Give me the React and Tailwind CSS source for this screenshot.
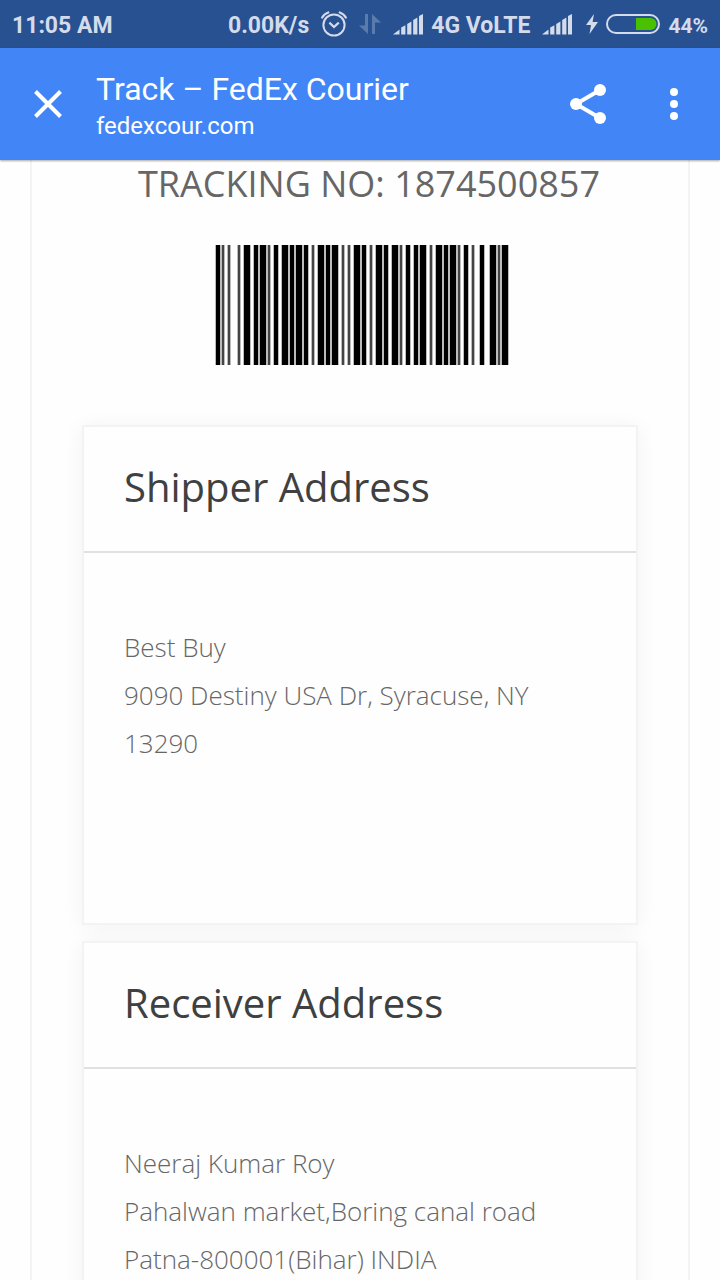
const ADDRESSES = [
  {
    title: "Shipper Address",
    lines: ["Best Buy", "9090 Destiny USA Dr, Syracuse, NY 13290"],
  },
  {
    title: "Receiver Address",
    lines: ["Neeraj Kumar Roy", "Pahalwan market,Boring canal road", "Patna-800001(Bihar) INDIA"],
  },
];

// Code 128 (set B) bar/space widths, digits 0-9
const CODE128_DIGITS = [
  "123122", "123221", "223211", "221132", "221231",
  "213212", "223112", "312131", "311222", "321122",
];
const CODE128_START = "211214";
const CODE128_STOP = "2331113";

function Barcode({ value, check }) {
  const widths = [
    CODE128_START,
    ...value.split("").map((d) => CODE128_DIGITS[Number(d)]),
    check,
    CODE128_STOP,
  ].join("").split("").map(Number);

  const bars = [];
  let x = 0;
  widths.forEach((w, i) => {
    if (i % 2 === 0) bars.push({ x, w });
    x += w;
  });

  return (
    <svg
      viewBox={`-0.5 0 ${x + 1} 60`}
      preserveAspectRatio="none"
      className="h-[120px] w-[294px]"
      role="img"
      aria-label={`Barcode ${value}`}
    >
      {/* soft edges, then the solid bars */}
      {bars.map((b) => (
        <rect key={b.x} x={b.x - 0.5} y="0" width={b.w + 1} height="60" fill="#bbb" />
      ))}
      {bars.map((b) => (
        <rect key={b.x} x={b.x} y="0" width={b.w} height="60" fill={b.w === 1 ? "#444" : "#000"} />
      ))}
    </svg>
  );
}

function SignalIcon() {
  return (
    <svg viewBox="0 0 30 21" className="h-[21px] w-[30px]" fill="currentColor" aria-hidden="true">
      <path d="M0 20.5 6.5 15.5V20.5Z" />
      <path d="M8.2 13.5 12.4 11.2V20.5H8.2Z" />
      <path d="M14.2 10 18.4 7.6V20.5H14.2Z" />
      <path d="M20.2 6 24.4 3.6V20.5H20.2Z" />
      <path d="M26 2 30 0V20.5H26Z" />
    </svg>
  );
}

function AlarmIcon() {
  return (
    <svg viewBox="0 0 26 26" className="h-[26px] w-[26px]" fill="none" stroke="currentColor" strokeLinecap="round" aria-hidden="true">
      <circle cx="13" cy="14" r="10.6" strokeWidth="2" />
      <path d="M8.4 11.6 13 16 17.8 11.6" strokeWidth="2.2" strokeLinecap="butt" />
      <path d="M1.2 6.6C2.4 4.2 4.6 2.4 7.3 1.5M24.8 6.6C23.6 4.2 21.4 2.4 18.7 1.5" strokeWidth="2.2" />
    </svg>
  );
}

function DataIcon() {
  return (
    <svg viewBox="0 0 22 20" className="h-5 w-[22px] opacity-30" fill="currentColor" aria-hidden="true">
      <path d="M6 0H9V20L0 11.5H6Z" />
      <path d="M13 20H16V8.5H22L13 0Z" />
    </svg>
  );
}

function BatteryIcon() {
  return (
    <svg viewBox="0 0 54 20" className="h-5 w-[54px]" aria-hidden="true">
      <rect x="1" y="1" width="52" height="18" rx="9" fill="none" stroke="currentColor" strokeWidth="2" />
      <path d="M30 4H44.5A6 6 0 0 1 44.5 16H30Z" fill="#49c100" />
    </svg>
  );
}

function StatusBar() {
  return (
    <div className="flex h-12 shrink-0 items-center justify-between bg-[#285192] px-3 text-[23px] font-bold leading-6 text-[#d4dceb]">
      <span className="pt-1">11:05 AM</span>
      <div className="flex items-center">
        <span className="pt-1">0.00K/s</span>
        <span className="ml-3"><AlarmIcon /></span>
        <span className="ml-3"><DataIcon /></span>
        <span className="ml-3"><SignalIcon /></span>
        <span className="ml-2 pt-1">4G VoLTE</span>
        <span className="ml-3"><SignalIcon /></span>
        <svg viewBox="0 0 12 20" className="ml-3.5 h-5 w-3" fill="currentColor" aria-hidden="true">
          <path d="M8 0 0 11H5L3.5 20 12 8H6.6Z" />
        </svg>
        <span className="ml-2"><BatteryIcon /></span>
        <span className="ml-2 pt-1 text-[21px]">44%</span>
      </div>
    </div>
  );
}

function AppBar() {
  return (
    <header className="relative z-10 flex h-28 shrink-0 items-center bg-[#4285f6] text-white shadow-[0_1px_2px_rgba(0,0,0,0.35)]">
      <button type="button" aria-label="Close" className="flex h-24 w-24 items-center justify-center">
        <svg viewBox="0 0 28 28" className="h-7 w-7" stroke="currentColor" strokeWidth="4" aria-hidden="true">
          <path d="M1.5 1.5 26.5 26.5M26.5 1.5 1.5 26.5" />
        </svg>
      </button>
      <div className="min-w-0 flex-1 pt-0.5">
        <h1 className="truncate text-[32px] leading-[42px]">Track – FedEx Courier</h1>
        <p className="truncate text-[24px] leading-8">fedexcour.com</p>
      </div>
      <button type="button" aria-label="Share" className="flex h-24 w-20 items-center justify-center">
        <svg viewBox="0 0 36 40" className="h-10 w-9" fill="currentColor" aria-hidden="true">
          <path d="M30 6 6 20 30 34" fill="none" stroke="currentColor" strokeWidth="4" />
          <circle cx="30" cy="6" r="6" />
          <circle cx="6" cy="20" r="6" />
          <circle cx="30" cy="34" r="6" />
        </svg>
      </button>
      <button type="button" aria-label="More options" className="flex h-24 w-23 items-center justify-center">
        <svg viewBox="0 0 8 32" className="h-8 w-2" fill="currentColor" aria-hidden="true">
          <circle cx="4" cy="4" r="4" />
          <circle cx="4" cy="16" r="4" />
          <circle cx="4" cy="28" r="4" />
        </svg>
      </button>
    </header>
  );
}

function AddressCard({ title, lines }) {
  return (
    <section className="border-2 border-[#f3f3f3] bg-[#fefefe] shadow-[0_2px_20px_rgba(0,0,0,0.05)]">
      <h3 className="border-b-2 border-[#e1e1e1] px-10 pb-[34px] pt-[30px] text-[40px] leading-[60px] text-[#404040]">
        {title}
      </h3>
      <address className="px-10 pb-[156px] pt-[70px] text-[26px] font-light not-italic leading-12 text-[#666]">
        {lines.map((line) => (
          <p key={line}>{line}</p>
        ))}
      </address>
    </section>
  );
}

export default function App() {
  return (
    <div className="flex h-screen flex-col bg-[#fefefe] font-[Roboto,sans-serif]">
      <StatusBar />
      <AppBar />
      <main className="min-h-0 flex-1 overflow-y-auto px-[30px] font-['Open_Sans',sans-serif] [scrollbar-width:none]">
        <div className="border-x-2 border-[#f3f3f3] px-[50px] pb-10">
          <h2 className="pl-[18px] text-center text-[36px] leading-12 text-[#666]">
            TRACKING NO: 1874500857
          </h2>
          <div className="mt-[37px] flex justify-center pl-1">
            <Barcode value="1874500857" check="122213" />
          </div>
          <div className="mt-[60px] flex flex-col gap-4">
            {ADDRESSES.map((a) => (
              <AddressCard key={a.title} title={a.title} lines={a.lines} />
            ))}
          </div>
        </div>
      </main>
    </div>
  );
}
